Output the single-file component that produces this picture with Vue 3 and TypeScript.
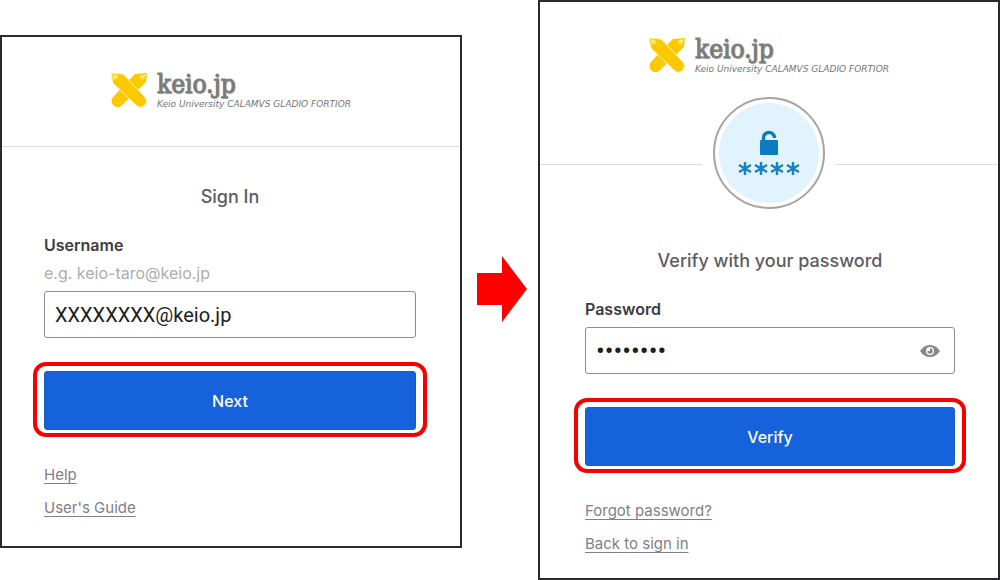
<script setup lang="ts">
import { ref } from 'vue'

const username = ref('XXXXXXXX@keio.jp')
const password = ref('password')
const revealed = ref(false)

const signInLinks = ['Help', "User's Guide"]
const passwordLinks = ['Forgot password?', 'Back to sign in']
</script>

<template>
  <main class="steps">
    <svg class="defs" aria-hidden="true">
      <symbol id="pens" viewBox="0 0 36 36">
        <path d="M36 1 L24 2 L15 11 L2 25 Q-1 29 2 33 Q6 37 10 34 L32 13 L35 10 Z" fill="#fcc800" />
        <path d="M0 1 L12 2 L34 25 Q37 29 34 33 Q30 37 26 34 L2 11 Z" fill="#fcc800" stroke="#fff3b8" stroke-width="1" />
        <path d="M1 2 L7 3 L7 6 L3 8 Z M35 2 L29 3 L29 6 L33 8 Z" fill="#f2e640" />
        <path d="M2 3 L6 6 M34 3 L30 6" stroke="#fffbe0" stroke-width="1" />
      </symbol>
    </svg>

    <form class="card card-signin" @submit.prevent>
      <header class="brand">
        <svg class="brand-mark" aria-hidden="true"><use href="#pens" /></svg>
        <div class="brand-text">
          <span class="brand-name">keio.jp</span>
          <span class="brand-tag">Keio University CALAMVS GLADIO FORTIOR</span>
        </div>
      </header>
      <div class="body">
        <h1 class="title">Sign In</h1>
        <label class="label" for="username">Username</label>
        <p id="username-hint" class="hint">e.g. keio-taro@keio.jp</p>
        <input id="username" v-model="username" class="field" type="text" aria-describedby="username-hint" />
        <div class="action"><button class="submit" type="submit">Next</button></div>
        <nav class="links">
          <a v-for="link in signInLinks" :key="link" href="#">{{ link }}</a>
        </nav>
      </div>
    </form>

    <svg class="arrow" viewBox="0 0 50 66" aria-hidden="true">
      <path d="M0 17H25V0L50 33L25 66V49H0Z" fill="#f00" />
    </svg>

    <form class="card card-verify" @submit.prevent>
      <header class="brand">
        <svg class="brand-mark" aria-hidden="true"><use href="#pens" /></svg>
        <div class="brand-text">
          <span class="brand-name">keio.jp</span>
          <span class="brand-tag">Keio University CALAMVS GLADIO FORTIOR</span>
        </div>
      </header>
      <div class="divider">
        <svg class="badge" viewBox="0 0 112 112" aria-hidden="true">
          <circle cx="56" cy="56" r="55" fill="#fff" stroke="#a7a3a3" stroke-width="2" />
          <circle cx="56" cy="56" r="50" fill="#e1f3fe" />
          <rect x="47" y="43" width="18" height="15" rx="1" fill="#0c7cc0" />
          <path d="M50.500 45V41a5.500 5.500 0 0 1 11 0" fill="none" stroke="#0c7cc0" stroke-width="3.500" />
          <g fill="none" stroke="#1683c6" stroke-width="2.400">
            <path v-for="x in [32, 48, 64, 80]" :key="x" :d="`M${x} 65v13M${x - 6} 68l12 7M${x + 6} 68l-12 7`" />
          </g>
        </svg>
      </div>
      <div class="body">
        <h1 class="title">Verify with your password</h1>
        <label class="label" for="password">Password</label>
        <div class="field password-box">
          <input id="password" v-model="password" class="password" :type="revealed ? 'text' : 'password'" />
          <button class="reveal" type="button" aria-label="Show password" @click="revealed = !revealed">
            <svg viewBox="0 0 20 14" aria-hidden="true">
              <path d="M0 7Q4 1 10 1T20 7Q16 13 10 13T0 7Z" fill="#86868c" />
              <circle cx="10" cy="7" r="4" fill="#fff" />
              <circle cx="10" cy="7" r="2.700" fill="#86868c" />
              <path d="M10 7V4A3 3 0 0 0 7 7Z" fill="#fff" />
            </svg>
          </button>
        </div>
        <div class="action"><button class="submit" type="submit">Verify</button></div>
        <nav class="links">
          <a v-for="link in passwordLinks" :key="link" href="#">{{ link }}</a>
        </nav>
      </div>
    </form>
  </main>
</template>

<style>
body {
  margin: 0;
  background: #fff;
}
</style>

<style scoped>
* {
  box-sizing: border-box;
}

.steps {
  display: grid;
  grid-template-columns: minmax(0, 1fr) 76px minmax(0, 1fr);
  align-items: start;
  font-family: Inter, "Liberation Sans", sans-serif;
}

.defs {
  position: absolute;
  width: 0;
  height: 0;
}

.card {
  border: 2px solid #2b2a2c;
  background: #fff;
}

.card-signin {
  margin-top: 35px;
}

.brand {
  display: flex;
  justify-content: center;
  gap: 10px;
  padding-top: 34px;
}

.card-signin .brand {
  padding-bottom: 35px;
  border-bottom: 1px solid #dcdcdc;
}

.brand-mark {
  width: 36px;
  height: 36px;
  margin-top: 1px;
}

.brand-text {
  display: flex;
  flex-direction: column;
  color: #757575;
}

.brand-name {
  font: 26px/26px "DejaVu Serif Condensed", "DejaVu Serif", serif;
  -webkit-text-stroke: 1px #808080;
  text-shadow: 1px 1px 1px #bbb;
}

.brand-tag {
  font: italic 9px/14px "DejaVu Sans", sans-serif;
  white-space: nowrap;
}

.divider {
  display: flex;
  gap: 11px;
  margin-top: 21px;
}

.divider::before,
.divider::after {
  content: "";
  flex: 1;
  height: 1px;
  margin-top: 67px;
  background: #dcdcdc;
}

.badge {
  width: 112px;
  height: 112px;
}

.body {
  display: flex;
  flex-direction: column;
}

.card-signin .body {
  padding: 38px 44px 26px 42px;
}

.card-verify .body {
  padding: 40px 43px 22px 45px;
}

.title {
  margin: 0 0 24px;
  font-size: 18px;
  line-height: 24px;
  font-weight: 500;
  color: #5c5c62;
  text-align: center;
}

.label {
  font-size: 16px;
  line-height: 24px;
  font-weight: 600;
  color: #3c3c40;
}

.hint {
  margin: 4px 0 0;
  font-size: 16px;
  line-height: 24px;
  color: #adadad;
}

.field {
  height: 47px;
  margin-top: 6px;
  padding: 0 10px;
  border: 1px solid #8c8c96;
  border-radius: 3px;
  background: #fff;
  color: #1d1d21;
  font-family: Roboto, Inter, sans-serif;
  font-size: 20px;
}

.password-box {
  display: flex;
  align-items: center;
}

.password {
  flex: 1;
  min-width: 0;
  height: 28px;
  padding: 0;
  border: 0;
  outline: 0;
  background: none;
  color: inherit;
  font: inherit;
}

.password[type="password"] {
  font-size: 26px;
}

.reveal {
  display: flex;
  padding: 4px;
  border: 0;
  background: none;
}

.reveal svg {
  width: 20px;
  height: 14px;
}

.action {
  position: relative;
  display: flex;
  margin-top: 33px;
}

.action::before {
  content: "";
  position: absolute;
  inset: -9px -11px -7px;
  border: 4px solid #f80000;
  border-radius: 13px;
}

.submit {
  position: relative;
  flex: 1;
  height: 59px;
  border: 1px solid #1d5fc0;
  border-radius: 3px;
  background: #1662dd;
  color: #fff;
  font-family: inherit;
  font-size: 16px;
  font-weight: 500;
}

.links {
  display: flex;
  flex-direction: column;
  align-items: flex-start;
  gap: 9px;
  margin-top: 33px;
}

.links a {
  font-size: 15px;
  line-height: 24px;
  color: #808088;
  text-underline-offset: 3px;
}

.arrow {
  width: 50px;
  height: 66px;
  margin: 256px 0 0 15px;
}
</style>
